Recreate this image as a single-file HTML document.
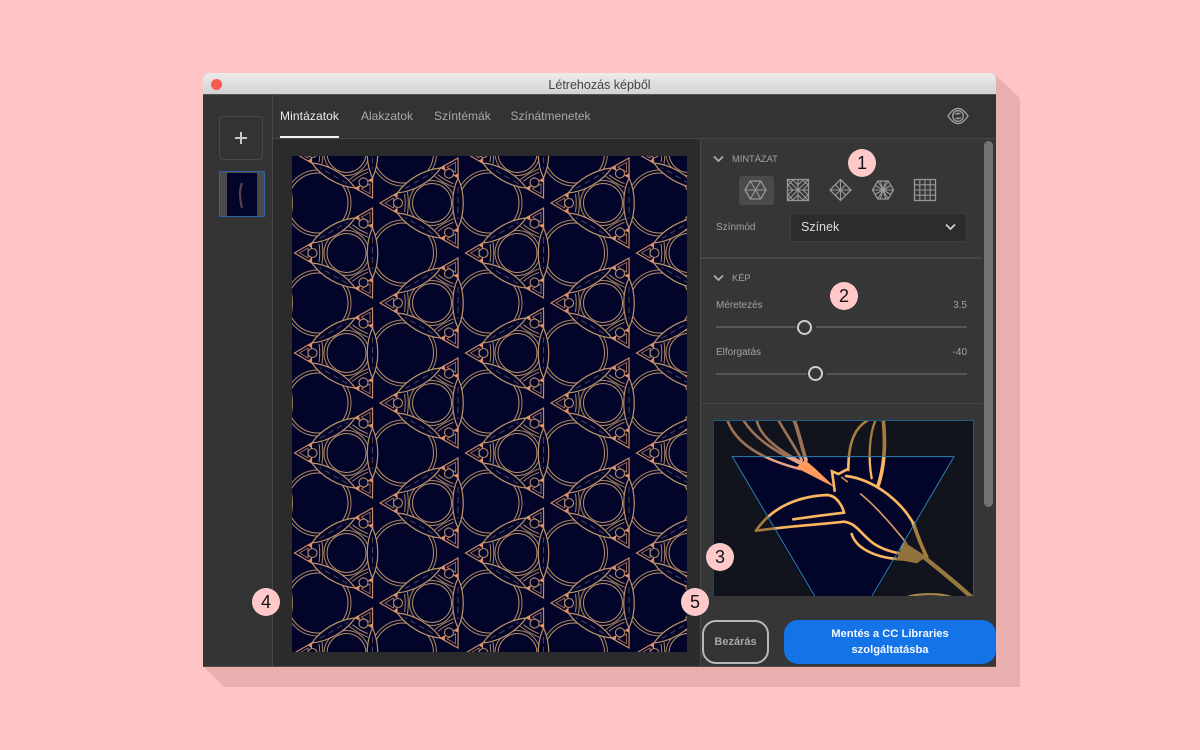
<!DOCTYPE html>
<html lang="hu"><head><meta charset="utf-8"><title>Létrehozás képből</title>
<style>
html,body{margin:0;padding:0}
body{width:1200px;height:750px;overflow:hidden;background:#ffc5c5;position:relative;font-family:"Liberation Sans",sans-serif}
div,span,svg{position:absolute;box-sizing:border-box}
.t{white-space:nowrap;line-height:1}
.badge{width:28px;height:28px;border-radius:50%;background:#ffc9c9;color:#111;font-size:18px;line-height:28px;text-align:center}
.tab{top:109px;font-size:12px;color:#a8a8a8;white-space:nowrap;line-height:14px}
.lbl{font-size:10px;color:#a2a2a2;white-space:nowrap;line-height:12px}
.hr{background:#454545;height:1px}
</style></head><body>
<svg style="left:0;top:0" width="1200" height="750"><polygon points="993,73 1020,98 1020,687 224,687 203,666" fill="#e9aeae"/></svg>

<div style="left:203px;top:73px;width:793px;height:594px;background:#333;border-radius:5px 5px 0 0;overflow:hidden">
<div style="left:0;top:0;width:793px;height:22px;background:linear-gradient(#ececec,#d2d2d2);border-bottom:1px solid #555"></div>
<div style="left:8px;top:6px;width:11px;height:11px;border-radius:50%;background:#fb5a52"></div>
<div class="t" style="left:0;width:793px;text-align:center;top:5px;font-size:12.500px;color:#444;line-height:14px">Létrehozás képből</div>
</div>

<!-- left rail / body -->
<div style="left:203px;top:95px;width:69px;height:571px;background:#333"></div>
<div style="left:272px;top:95px;width:1px;height:571px;background:#484848"></div>
<div style="left:273px;top:95px;width:723px;height:43px;background:#333"></div>
<div style="left:273px;top:138px;width:723px;height:1px;background:#454545"></div>
<div style="left:273px;top:139px;width:427px;height:527px;background:#2b2b2b"></div>
<div style="left:700px;top:139px;width:296px;height:527px;background:#363636;border-left:1px solid #484848"></div>
<div style="left:203px;top:666px;width:793px;height:1px;background:#5a4a4a"></div>

<div style="left:219px;top:116px;width:44px;height:44px;border:1.5px solid #484848;border-radius:4px"></div>
<div style="left:235px;top:137px;width:12px;height:2px;background:#c8c8c8"></div>
<div style="left:240px;top:132px;width:2px;height:12px;background:#c8c8c8"></div>

<div style="left:219px;top:171px;width:46px;height:46px;border:1.5px solid #2c62a8;background:#4a4a4a;border-radius:1px"></div>
<div style="left:227px;top:172.5px;width:30px;height:43px;background:#020529"></div>
<svg style="left:227px;top:172px" width="30" height="44"><path d="M15 11C12 18 13 28 15 36" stroke="#5d3a55" stroke-width="2.200" fill="none"/></svg>

<!-- tabs -->
<div class="tab" style="left:280px;color:#ededed;letter-spacing:.1px">Mintázatok</div>
<div style="left:280px;top:136px;width:59px;height:2px;background:#f0f0f0"></div>
<div class="tab" style="left:361px">Alakzatok</div>
<div class="tab" style="left:434px">Színtémák</div>
<div class="tab" style="left:510.500px">Színátmenetek</div>

<svg style="left:946px;top:105px" width="24" height="22" viewBox="0 0 24 22" fill="none" stroke="#9a9a9a" stroke-width="1.400">
<path d="M2 11C6 5 9 3.500 12 3.500S18 5 22 11C18 17 15 18.500 12 18.500S6 17 2 11Z"/>
<circle cx="12" cy="11" r="5.300"/>
<path d="M9 9.500l3-1.500 2.500 1M15 12.500l-3 1.500-2.500-1M12 8v2M12 14v-2" stroke-width="1.100"/>
</svg>

<!-- pattern -->
<svg style="left:292px;top:156px" width="395" height="496" viewBox="292 156 395 496">
<defs>
<g id="tri">
<polygon points="-52,0 -35,-10 -35,10" fill="#020529" stroke="#c98a66" stroke-width="1.200"/>
<polygon points="-47,0 -38.500,-5 -38.500,5" fill="none" stroke="#a87a60" stroke-width=".8"/>
<polygon points="-39,-8 -34,-11 -35,-5" fill="#e09068"/>
<polygon points="-39,8 -34,11 -35,5" fill="#e09068"/>
<circle cx="-34" cy="0" r="4.500" fill="#020529" stroke="#b48c66" stroke-width="1.100"/>
<path d="M-27.500 -9C-26.500 -3 -26.500 3 -27.500 9M-24.500 -11C-23.500 -4 -23.500 4 -24.500 11" stroke="#a98660" stroke-width="1" fill="none"/>
<path d="M26 -25C33 -10 33 10 26 25C19 10 19 -10 26 -25Z" fill="#020529" stroke="#bc9368" stroke-width="1.200"/>
<path d="M26 -16V16" stroke="#4a4258" stroke-width="1" stroke-dasharray="6 4" fill="none"/>
</g>
<g id="r" fill="none">
<circle cx="-28.500" cy="50" r="33" stroke="#a5835f" stroke-width="1"/>
<circle cx="-28.500" cy="50" r="30" stroke="#bc9368" stroke-width="1"/>
<circle cx="0" cy="0" r="22.500" stroke="#a5835f" stroke-width="1"/>
<circle cx="0" cy="0" r="19.500" stroke="#bc9368" stroke-width="1"/>
</g>
<g id="u"><use href="#tri"/><use href="#tri" transform="rotate(120)"/><use href="#tri" transform="rotate(240)"/></g>
<g id="colr"><use href="#r" y="103"/><use href="#r" y="203"/><use href="#r" y="303"/><use href="#r" y="403"/><use href="#r" y="503"/><use href="#r" y="603"/><use href="#r" y="703"/></g>
<g id="colu"><use href="#u" y="103"/><use href="#u" y="203"/><use href="#u" y="303"/><use href="#u" y="403"/><use href="#u" y="503"/><use href="#u" y="603"/><use href="#u" y="703"/></g>
</defs>
<rect x="292" y="156" width="395" height="496" fill="#020529"/>
<use href="#colr" x="261"/><use href="#colr" x="346.500" y="-50"/><use href="#colr" x="432"/><use href="#colr" x="517.500" y="-50"/><use href="#colr" x="603"/><use href="#colr" x="688.500" y="-50"/><use href="#colr" x="774"/>
<use href="#colu" x="261"/><use href="#colu" x="346.500" y="-50"/><use href="#colu" x="432"/><use href="#colu" x="517.500" y="-50"/><use href="#colu" x="603"/><use href="#colu" x="688.500" y="-50"/><use href="#colu" x="774"/>
</svg>

<!-- right panel -->
<svg style="left:712px;top:154px" width="13" height="10" fill="none" stroke="#b0b0b0" stroke-width="1.700"><path d="M2 2.500L6.500 7 11 2.500"/></svg>
<div class="lbl" style="left:732px;top:153px;font-size:9.300px">MINTÁZAT</div>
<div style="left:739px;top:176px;width:35px;height:29px;background:#4a4a4a;border-radius:3px"></div>
<svg style="left:740px;top:176px" width="200" height="30" fill="none" stroke="#989898" stroke-width="1.100">
<g transform="translate(15.500,14)"><polygon stroke-width="1.300" points="-10.500,0 -5.200,-9 5.200,-9 10.500,0 5.200,9 -5.200,9"/><path d="M-10.500 0H10.500M-5.200 -9L5.200 9M5.200 -9L-5.200 9"/></g>
<g transform="translate(58,14)"><rect x="-10.500" y="-10.500" width="21" height="21" stroke-width="1.300"/><path d="M-10 -10L10 10M10 -10L-10 10M0 -10V10M-10 0H10M-5 -10L-10 -5M5 -10L10 -5M-5 10L-10 5M5 10L10 5M0 -5L5 -10M0 -5L-5 -10M0 5L5 10M0 5L-5 10M-5 0L-10 -5M-5 0L-10 5M5 0L10 -5M5 0L10 5"/></g>
<g transform="translate(100.500,14)"><polygon stroke-width="1.300" points="0,-10.500 10.500,0 0,10.500 -10.500,0"/><path d="M-5 -5L5 5M5 -5L-5 5M0 -10V10M-10 0H10"/></g>
<g transform="translate(143,14)"><polygon stroke-width="1.300" points="-10.500,0 -5.200,-9 5.200,-9 10.500,0 5.200,9 -5.200,9"/><path d="M-10 0H10M-5.200 -9L5.200 9M5.200 -9L-5.200 9M-2.700 -9L2.700 9M2.700 -9L-2.700 9M-8 -4.500L8 4.500M8 -4.500L-8 4.500"/></g>
<g transform="translate(185,14)"><rect x="-10.500" y="-10.500" width="21" height="21" stroke-width="1.300"/><path d="M-5.200 -10V10M0 -10V10M5.200 -10V10M-10 -5.200H10M-10 0H10M-10 5.200H10"/></g>
</svg>
<div class="lbl" style="left:716px;top:222px">Színmód</div>
<div style="left:790px;top:213px;width:177px;height:29px;background:#2c2c2c;border:1px solid #3f3f3f;border-radius:3px"></div>
<div class="t" style="left:801px;top:220px;font-size:12.500px;color:#dcdcdc;line-height:15px">Színek</div>
<svg style="left:944px;top:222px" width="13" height="10" fill="none" stroke="#d0d0d0" stroke-width="1.700"><path d="M2 2.500L6.500 7 11 2.500"/></svg>
<div class="hr" style="left:701px;top:257px;width:281px;height:2px"></div>

<svg style="left:712px;top:273px" width="13" height="10" fill="none" stroke="#b0b0b0" stroke-width="1.700"><path d="M2 2.500L6.500 7 11 2.500"/></svg>
<div class="lbl" style="left:732px;top:272px;font-size:9.300px">KÉP</div>
<div class="lbl" style="left:716px;top:300px">Méretezés</div>
<div class="lbl" style="right:233px;top:300px">3.5</div>
<div style="left:716px;top:326px;width:80px;height:2px;background:#565656"></div>
<div style="left:816px;top:326px;width:151px;height:2px;background:#565656"></div>
<div style="left:797px;top:320px;width:15px;height:15px;border:2px solid #cfcfcf;border-radius:50%"></div>
<div class="lbl" style="left:716px;top:347px">Elforgatás</div>
<div class="lbl" style="right:233px;top:347px">-40</div>
<div style="left:716px;top:373px;width:91px;height:2px;background:#565656"></div>
<div style="left:827px;top:373px;width:140px;height:2px;background:#565656"></div>
<div style="left:808px;top:366px;width:15px;height:15px;border:2px solid #cfcfcf;border-radius:50%"></div>
<div class="hr" style="left:701px;top:403px;width:281px"></div>

<div style="left:984px;top:141px;width:9px;height:366px;background:#727272;border-radius:5px"></div>

<!-- preview -->
<svg style="left:700px;top:400px" width="300" height="200" viewBox="0 0 900 600">
<defs><clipPath id="pc"><rect x="38" y="60" width="784" height="528"/></clipPath></defs>
<g clip-path="url(#pc)">
<rect x="38" y="60" width="784" height="528" fill="#020529"/>
<g fill="none" stroke-linecap="round">
<g stroke="#e8a488" stroke-width="8">
<path d="M82 60C105 125 175 175 300 207"/>
<path d="M130 60C160 110 215 150 310 195"/>
<path d="M170 60C178 100 215 140 310 190"/>
<path d="M235 60C260 105 285 140 305 180"/>
<path d="M282 60C295 90 305 140 318 180" stroke-width="11"/>
</g>
<path d="M288 203L315 180L345 205L405 262L370 245Z" fill="#ff9a5c"/>
<g stroke="#fbb660" stroke-width="8">
<path d="M404 272L396 214L415 222L442 208"/>
<path d="M505 60C468 80 445 120 445 210"/>
<path d="M525 65C510 100 503 170 515 235" stroke-width="7"/>
<path d="M550 60C556 120 556 190 535 255" stroke-width="11"/>
<path d="M438 228C520 238 600 300 640 370"/>
<path d="M168 392C210 330 280 290 380 285C410 285 428 320 432 338C370 345 320 352 280 358"/>
<path d="M168 392C260 380 340 375 432 365C470 370 480 400 520 430C550 450 590 462 640 465"/>
<path d="M455 402C470 450 540 482 640 478" stroke-width="8"/>
<path d="M482 282C530 320 580 380 620 430" stroke-width="5" stroke="#d89a60"/>
<path d="M640 370C650 400 665 440 680 470" stroke-width="11"/>
<path d="M425 232L442 245" stroke-width="5" stroke="#c08a55"/>
</g>
<path d="M610 425L680 470L650 490L590 478Z" fill="#d8a35c"/>
<path d="M670 470C720 510 770 550 815 592" stroke="#e0ac60" stroke-width="13"/>
<path d="M625 590C660 580 720 580 750 590" stroke="#f0c070" stroke-width="7"/>
</g>
<path fill-rule="evenodd" d="M38 60H822V588H38ZM97 170L345 600H515L762 170Z" fill="rgb(40,40,13)" fill-opacity=".4"/>
<path d="M345 590L97 170H762L515 590" fill="none" stroke="#2a80ad" stroke-width="3"/>
<rect x="39.500" y="61.500" width="781" height="540" fill="none" stroke="#1d5f86" stroke-width="3"/>
</g>
</svg>
<div style="left:701px;top:596px;width:283px;height:70px;background:#363636"></div>

<!-- buttons -->
<div style="left:702px;top:620px;width:67px;height:44px;border:2px solid #b8b8b8;border-radius:14px;background:#333;color:#a8a8a8;font-size:11px;font-weight:bold;text-align:center;line-height:40px">Bezárás</div>
<div style="left:784px;top:620px;width:212px;height:44px;border-radius:14px;background:#1473e6;color:#f4f8ff;font-size:11.200px;font-weight:bold;text-align:center;line-height:16px;padding-top:6px">Mentés a CC Libraries<br>szolgáltatásba</div>

<div class="badge" style="left:848px;top:149px">1</div>
<div class="badge" style="left:830px;top:282px">2</div>
<div class="badge" style="left:706px;top:543px">3</div>
<div class="badge" style="left:252px;top:588px">4</div>
<div class="badge" style="left:681px;top:588px">5</div>
</body></html>
